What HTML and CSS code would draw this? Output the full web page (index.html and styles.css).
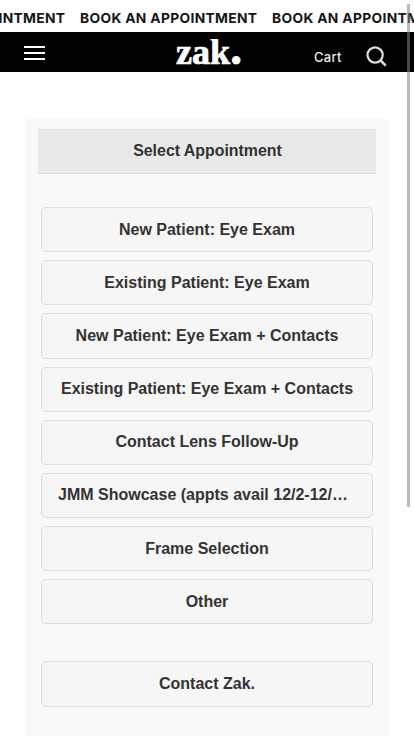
FILE: index.html
```html
<!DOCTYPE html>
<html lang="en">
<head>
<meta charset="utf-8">
<title>zak. appointments</title>
<link rel="stylesheet" href="styles.css">
</head>
<body>
<div class="ticker"><span>BOOK AN APPOINTMENT</span><span>BOOK AN APPOINTMENT</span><span>BOOK AN APPOINTMENT</span></div>
<header class="bar">
  <div class="menu"><i></i><i></i><i></i></div>
  <svg class="logo" width="70" height="32" viewBox="0 0 70 32"><text x="2" y="25" textLength="66" lengthAdjust="spacingAndGlyphs">zak<tspan class="dot">.</tspan></text></svg>
  <div class="tools">
    <span class="cart">Cart</span>
    <svg width="22" height="22" viewBox="0 0 22 22" fill="none" stroke="#ddd" stroke-width="2.2"><circle cx="9.6" cy="9" r="7.6"/><path d="M14.8 14.2l5.4 5.4" stroke-width="2.6"/></svg>
  </div>
</header>
<main class="panel">
  <h1>Select Appointment</h1>
  <div class="list">
    <button>New Patient: Eye Exam</button>
    <button>Existing Patient: Eye Exam</button>
    <button>New Patient: Eye Exam + Contacts</button>
    <button>Existing Patient: Eye Exam + Contacts</button>
    <button>Contact Lens Follow-Up</button>
    <button class="long">JMM Showcase (appts avail 12/2-12/…</button>
    <button>Frame Selection</button>
    <button>Other</button>
    <button class="contact">Contact Zak.</button>
  </div>
</main>
<div class="scrollbar"></div>
</body>
</html>
```

FILE: styles.css
```css
* { box-sizing: border-box; }
html, body { height: 736px; overflow: hidden; }
body { margin: 0; background: #fff; font-family: "Liberation Sans", Arial, sans-serif; color: #333; }
.ticker { height: 32px; overflow: hidden; display: flex; justify-content: flex-start; gap: 15px; padding-top: 2px; line-height: 32px; white-space: nowrap; font-family: Inter, sans-serif; font-weight: 700; font-size: 13.8px; letter-spacing: .33px; color: #161616; }
.ticker span { flex: none; width: 177px; }
.ticker span:first-child { margin-left: -112px; }
.bar { height: 40px; background: #000; display: grid; grid-template-columns: 150px 1fr 150px; padding: 0 27px 0 24px; align-items: center; }
.menu { display: flex; flex-direction: column; gap: 4px; width: 21px; margin-top: 2px; }
.menu i { height: 2px; background: #fff; }
.logo { display: block; fill: #fff; font-family: "Liberation Serif", serif; font-weight: 700; font-size: 35px; margin-top: 5px; stroke: #fff; stroke-width: .7px; }
.dot { font-size: 46px; }
.tools { display: flex; justify-content: flex-end; align-items: center; gap: 24px; padding: 9px 0 0; transform: translateX(-6.5px); }
.tools svg { margin: 1px 0 0; }
.cart { color: #eee; font: 500 13px/18px Inter, sans-serif; letter-spacing: .2px; }
.panel { margin: 47px 25px 0; height: 617px; background: #f9f9f9; padding: 10px 13px 0; }
h1 { margin: 0; height: 45px; background: #e9e9e9; border: 1px solid #ddd; border-width: 1px 0; text-align: center; font-size: 15.9px; line-height: 42px; padding-left: 1px; }
.list { display: flex; flex-direction: column; gap: 8px; padding: 33.1px 3px 0; }
button { flex: none; display: block; width: 100%; height: 45.17px; padding: 0; background: #f6f6f6; border: 1px solid #ddd; border-radius: 5px; color: #333; font: 700 16px/20px "Liberation Sans", Arial, sans-serif; white-space: nowrap; }
.long { padding-right: 8px; }
.contact { margin-top: 29.1px; }
.scrollbar { position: absolute; left: 407px; top: 4px; width: 3px; height: 503px; background: rgba(128, 128, 128, .55); }
```
